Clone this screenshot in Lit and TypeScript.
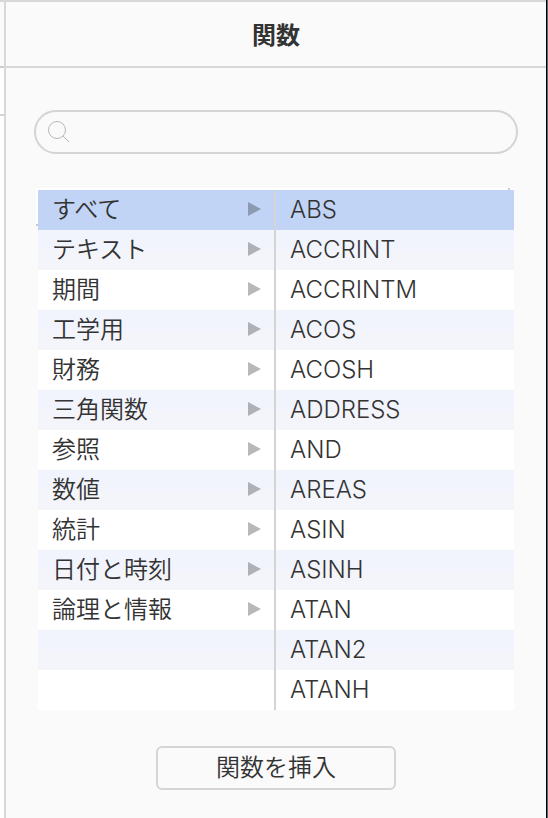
import { LitElement, html, css } from "lit";
import { customElement, property, state } from "lit/decorators.js";

const CATEGORIES = [
  "すべて", "テキスト", "期間", "工学用", "財務", "三角関数",
  "参照", "数値", "統計", "日付と時刻", "論理と情報",
];

const FUNCTIONS = [
  "ABS", "ACCRINT", "ACCRINTM", "ACOS", "ACOSH", "ADDRESS", "AND",
  "AREAS", "ASIN", "ASINH", "ATAN", "ATAN2", "ATANH",
];

@customElement("browser-column")
class BrowserColumn extends LitElement {
  @property({ attribute: false }) items: string[] = [];
  @property({ type: Number }) rows = 0;
  @property({ type: Boolean }) branch = false;
  @property() label = "";
  @state() private selected = 0;

  static styles = css`
    :host {
      display: block;
    }
    ul {
      list-style: none;
      margin: 0;
      padding: 0;
    }
    li {
      height: 40px;
      background: #ffffff;
    }
    li:nth-child(even) {
      background: linear-gradient(#f1f4fd 50%, #f4f5fa 50%);
    }
    li.selected {
      background: #c1d4f5;
    }
    .item {
      display: flex;
      align-items: center;
      justify-content: space-between;
      box-sizing: border-box;
      width: 100%;
      height: 100%;
      margin: 0;
      padding: 0 13px 0 14px;
      border: 0;
      background: none;
      color: #333333;
      font: inherit;
      text-align: left;
    }
    .arrow {
      width: 13px;
      height: 14px;
      margin-bottom: 2px;
      fill: #000000;
      fill-opacity: 0.28;
    }
  `;

  render() {
    const rows = Array.from({ length: this.rows }, (_, i) => this.items[i]);
    return html`<ul aria-label=${this.label}>
      ${rows.map((item, i) =>
        item
          ? html`<li class=${i === this.selected ? "selected" : ""}>
              <button class="item" type="button" @click=${() => (this.selected = i)}>
                <span>${item}</span>
                ${this.branch
                  ? html`<svg class="arrow" viewBox="0 0 13 14" aria-hidden="true"><path d="M0 0L13 7L0 14Z" /></svg>`
                  : ""}
              </button>
            </li>`
          : html`<li aria-hidden="true"></li>`
      )}
    </ul>`;
  }
}

@customElement("app-root")
class AppRoot extends LitElement {
  static styles = css`
    :host {
      display: flex;
      min-height: 100vh;
      background: #fafafa;
      color: #333333;
      font: 350 24px/36px Inter, "Noto Sans CJK JP", sans-serif;
    }
    .sheet {
      flex: none;
      width: 4px;
      border-top: 2px solid #d8d8d8;
      background: #ffffff;
    }
    .sheet-head {
      height: 64px;
      border-bottom: 2px solid #cccccc;
      background: #fafafa;
    }
    .sheet-row {
      height: 46px;
      border-bottom: 2px solid #d4d4d4;
    }
    .panel {
      flex: 1;
      min-width: 0;
      box-shadow: inset 2px 0 #d8d8d8, inset 0 2px #d8d8d8;
      padding: 2px 0 0 2px;
    }
    .edge {
      flex: none;
      width: 1px;
      border-left: 1px solid #000000;
      background: #5a6668;
    }
    header {
      height: 64px;
      display: flex;
      align-items: center;
      justify-content: center;
      border-bottom: 2px solid #d8d8d8;
    }
    h1 {
      margin: 0;
      padding-top: 4px;
      font-size: 24px;
      font-weight: 700;
    }
    .search {
      display: flex;
      align-items: center;
      gap: 8px;
      box-sizing: border-box;
      height: 44px;
      margin: 42px 28px 36px;
      padding: 0 20px 0 11px;
      border: 2px solid #d4d4d4;
      border-radius: 22px;
    }
    .search svg {
      flex: none;
      width: 24px;
      height: 24px;
      fill: none;
      stroke: #b8b8b8;
    }
    .search input {
      flex: 1;
      min-width: 0;
      border: 0;
      outline: 0;
      padding: 0;
      background: none;
      color: inherit;
      font: inherit;
    }
    .browser {
      position: relative;
      display: grid;
      grid-template-columns: 1fr 1fr;
      margin: 0 32px 36px;
    }
    .browser::before {
      content: "";
      position: absolute;
      top: -2px;
      left: -2px;
      right: 0;
      height: 36px;
      border-bottom: 2px solid #cccccc;
      background: #ffffff;
    }
    .browser::after {
      content: "";
      position: absolute;
      top: -2px;
      right: 4px;
      width: 2px;
      height: 2px;
      background: #cccccc;
    }
    browser-column {
      position: relative;
    }
    .categories {
      border-right: 2px solid #d4d4d4;
    }
    .insert {
      display: block;
      box-sizing: border-box;
      width: 240px;
      height: 44px;
      margin: 0 auto 28px;
      padding: 0;
      border: 2px solid #d4d4d4;
      border-radius: 6px;
      background: none;
      color: inherit;
      font: inherit;
    }
  `;

  render() {
    return html`
      <div class="sheet" aria-hidden="true">
        <div class="sheet-head"></div>
        <div class="sheet-row"></div>
      </div>
      <main class="panel">
        <header><h1>関数</h1></header>
        <label class="search">
          <svg viewBox="0 0 24 24" aria-hidden="true">
            <circle cx="10" cy="10" r="8.5" />
            <path d="M16 16L22 22" />
          </svg>
          <input type="search" aria-label="関数を検索" />
        </label>
        <div class="browser">
          <browser-column class="categories" label="カテゴリ" branch .items=${CATEGORIES} .rows=${13}></browser-column>
          <browser-column label="関数" .items=${FUNCTIONS} .rows=${13}></browser-column>
        </div>
        <button class="insert" type="button">関数を挿入</button>
      </main>
      <div class="edge" aria-hidden="true"></div>
    `;
  }
}
